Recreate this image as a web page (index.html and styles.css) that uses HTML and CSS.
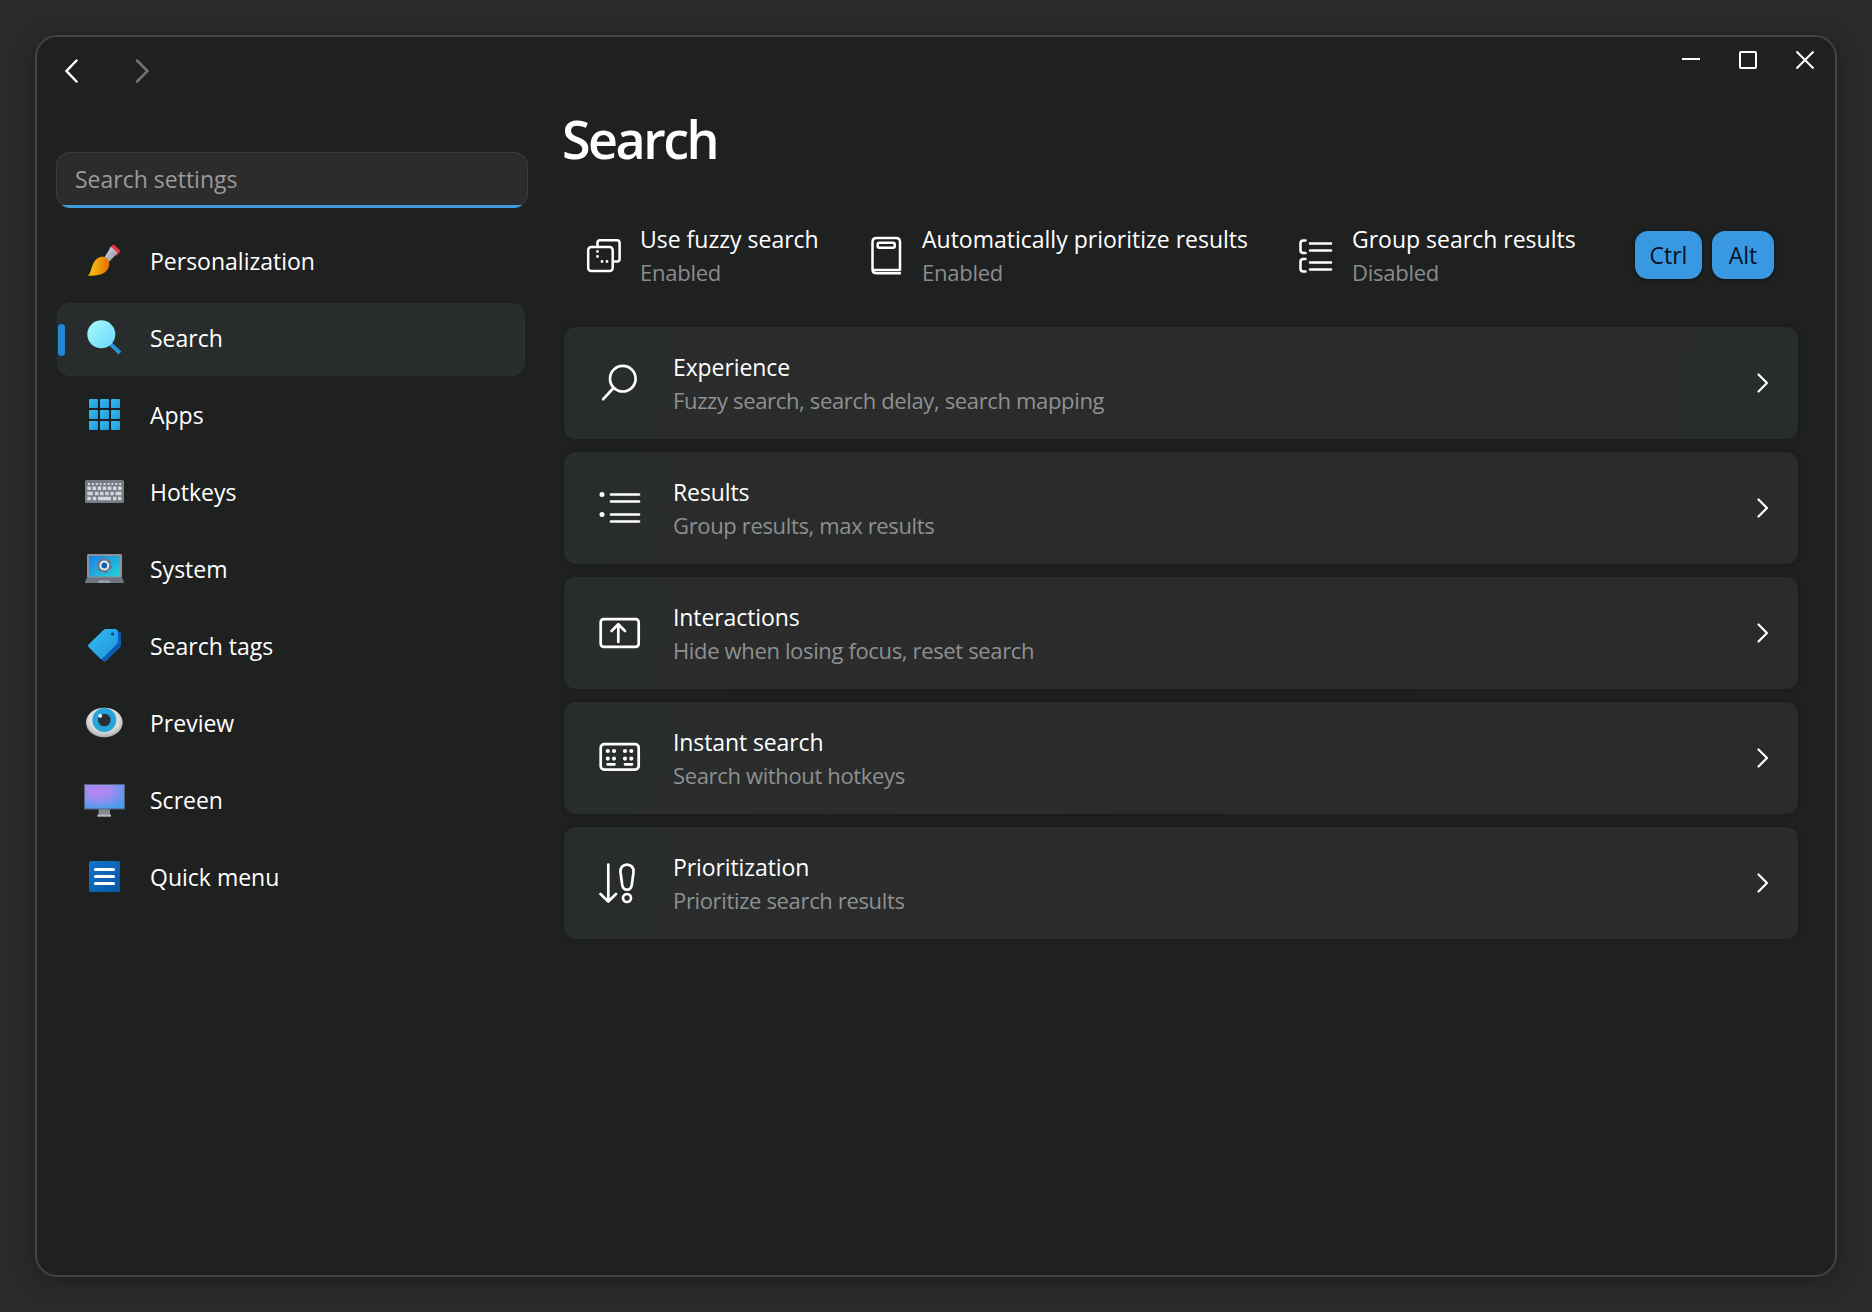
FILE: index.html
```html
<!DOCTYPE html>
<html lang="en">
<head>
<meta charset="utf-8">
<title>Search settings</title>
<link rel="stylesheet" href="styles.css">
</head>
<body>
<div class="window">
  <header class="titlebar">
    <nav class="history">
      <svg class="arrow" width="24" height="28" viewBox="0 0 24 28"><path d="M16.500 3.500 6.500 14l10 10.500"/></svg>
      <svg class="arrow arrow-off" width="24" height="28" viewBox="0 0 24 28"><path d="M7 3.500L17.500 14 7 24.500"/></svg>
    </nav>
    <div class="controls">
      <svg width="20" height="20" viewBox="0 0 20 20"><path d="M1 9h18"/></svg>
      <svg width="20" height="20" viewBox="0 0 20 20"><rect x="2" y="2" width="16" height="16" rx="1"/></svg>
      <svg width="20" height="20" viewBox="0 0 20 20"><path d="M1.500 1.500l17 17M18.500 1.500l-17 17"/></svg>
    </div>
  </header>
  <div class="body">
    <aside class="sidebar">
      <div class="search-box">Search settings</div>
      <ul class="menu">
        <li class="menu-item">
          <svg class="menu-icon" viewBox="0 0 44 44">
            <defs>
              <linearGradient id="brush" x1="0" y1=".5" x2="1" y2=".5"><stop offset="0" stop-color="#fcc60e"/><stop offset=".55" stop-color="#f09a08"/><stop offset="1" stop-color="#e56a08"/></linearGradient>
              <linearGradient id="ferrule" x1="0" y1="0" x2="1" y2="1"><stop offset="0" stop-color="#d5dae2"/><stop offset="1" stop-color="#8d939e"/></linearGradient>
            </defs>
            <path fill="#e8394a" d="M31.500 6.300l7 6.700-4 4.800-7.500-7z"/>
            <path fill="url(#ferrule)" d="M29 8.800l6.500 6.200-9 9.500-4.500-4.500z"/>
            <path fill="url(#brush)" d="M6 37.800c3-3 3.200-8 5.500-12.800 2.300-4.800 7-7.300 11.200-6 4.800 1.500 6 7.500 3 12.200-3.200 5-9.500 6.600-19.700 6.600z"/>
          </svg>
          <span>Personalization</span>
        </li>
        <li class="menu-item selected">
          <svg class="menu-icon" viewBox="0 0 44 44">
            <defs><linearGradient id="lens" x1="0" y1="0" x2="1" y2="1"><stop offset="0" stop-color="#a5fbfb"/><stop offset="1" stop-color="#6cd8fc"/></linearGradient></defs>
            <path stroke="#2793d6" stroke-width="4" d="M27.500 28l10.500 10"/>
            <circle cx="19.300" cy="19.300" r="14" fill="url(#lens)"/>
          </svg>
          <span>Search</span>
        </li>
        <li class="menu-item">
          <svg class="menu-icon" viewBox="0 0 44 44">
            <defs><linearGradient id="tile" x1="0" y1="0" x2="1" y2="1"><stop offset="0" stop-color="#3bb9ec"/><stop offset="1" stop-color="#1c9be0"/></linearGradient></defs>
            <g fill="url(#tile)">
              <rect x="7" y="7" width="9" height="9" rx="1"/><rect x="18" y="7" width="9" height="9" rx="1"/><rect x="29" y="7" width="9" height="9" rx="1"/>
              <rect x="7" y="18" width="9" height="9" rx="1"/><rect x="18" y="18" width="9" height="9" rx="1"/><rect x="29" y="18" width="9" height="9" rx="1"/>
              <rect x="7" y="29" width="9" height="9" rx="1"/><rect x="18" y="29" width="9" height="9" rx="1"/><rect x="29" y="29" width="9" height="9" rx="1"/>
            </g>
          </svg>
          <span>Apps</span>
        </li>
        <li class="menu-item">
          <svg class="menu-icon" viewBox="0 0 44 44">
            <rect x="3" y="11" width="39" height="23" rx="1.500" fill="#777b84"/>
            <g stroke="#d5d8df" fill="none">
              <path stroke-width="2" stroke-dasharray="2 1.900" d="M6 15h33.500"/>
              <path stroke-width="3.600" stroke-dasharray="3.600 1.530" d="M5.300 19.300H40"/>
              <path stroke-width="3.400" d="M5.300 24.500h5.500M13 24.500h3.500M18 24.500h3.500M23.200 24.500h3.500M28.300 24.500h3.500M33.500 24.500h6"/>
              <path stroke-width="3.400" d="M5.300 29.500h3.500M10.700 29.500h3.500M16 29.500h13M31 29.500h3.500M36 29.500h3.500"/>
            </g>
          </svg>
          <span>Hotkeys</span>
        </li>
        <li class="menu-item">
          <svg class="menu-icon" viewBox="0 0 44 44">
            <defs><linearGradient id="laptop" x1="0" y1="0" x2="1" y2="1"><stop offset="0" stop-color="#1b7fe6"/><stop offset="1" stop-color="#27d3d4"/></linearGradient></defs>
            <rect x="5" y="8" width="35" height="24" rx="1.500" fill="#8b919a"/>
            <rect x="7" y="10" width="31" height="20.500" fill="url(#laptop)"/>
            <circle cx="22.300" cy="19.500" r="6.400" fill="none" stroke="#727982" stroke-width="2.800" stroke-dasharray="3.400 3.300"/>
            <circle cx="22.300" cy="19.500" r="6.200" fill="#68707a"/>
            <circle cx="22.300" cy="19.500" r="4.900" fill="#e3edf5"/>
            <circle cx="22.300" cy="19.500" r="2.900" fill="#1560b0"/>
            <path fill="#6f757e" d="M5 31.500h35l2 4.200c0 .9-.5 1.300-1.300 1.300H4.300c-.8 0-1.300-.4-1.300-1.300z"/>
            <path fill="#9ba1aa" d="M15.500 36.800l2-2.500h9.500l2 2.500z"/>
          </svg>
          <span>System</span>
        </li>
        <li class="menu-item">
          <svg class="menu-icon" viewBox="0 0 44 44">
            <defs><linearGradient id="tag" x1="0" y1="0" x2="1" y2="1"><stop offset="0" stop-color="#37bdf0"/><stop offset="1" stop-color="#1b93dd"/></linearGradient></defs>
            <path fill="#0b5cb2" d="M24 8.500h12.500c1.700 0 2.500 1 2.500 2.500v10.500c0 1.500-.5 2.500-1.500 3.500L24 38c-1 1-2 1-3 0l-4-4z"/>
            <path fill="url(#tag)" d="M21.500 7c.8-.7 1.500-1 2.500-1h9c1.800 0 2.800 1 2.800 2.800V18c0 1.300-.3 2.300-1.300 3.300L20.500 35.500c-.8.800-1.700.8-2.500 0L6.800 24.300c-1-1-1-2 0-3z"/>
            <circle cx="30.700" cy="11" r="1.700" fill="#0b4f93"/>
          </svg>
          <span>Search tags</span>
        </li>
        <li class="menu-item">
          <svg class="menu-icon" viewBox="0 0 44 44">
            <defs>
              <radialGradient id="eye" cx=".5" cy=".4" r=".6"><stop offset="0" stop-color="#fff"/><stop offset=".7" stop-color="#d9dadb"/><stop offset="1" stop-color="#a9abad"/></radialGradient>
              <clipPath id="lid"><ellipse cx="22.300" cy="22.500" rx="18.300" ry="14.800"/></clipPath>
            </defs>
            <ellipse cx="22.300" cy="22.500" rx="18.300" ry="14.800" fill="url(#eye)"/>
            <circle cx="22.300" cy="20" r="12" fill="#25a5dc" clip-path="url(#lid)"/>
            <circle cx="22.300" cy="20" r="6.300" fill="#2a3036"/>
            <circle cx="18.200" cy="15.800" r="1.900" fill="#fff"/>
          </svg>
          <span>Preview</span>
        </li>
        <li class="menu-item">
          <svg class="menu-icon" viewBox="0 0 44 44">
            <defs><radialGradient id="monitor" cx=".35" cy=".25" r=".85"><stop offset="0" stop-color="#b884f0"/><stop offset=".4" stop-color="#9f8cf0"/><stop offset="1" stop-color="#3f9fec"/></radialGradient></defs>
            <rect x="16.500" y="32" width="11.500" height="6" fill="#86898d"/>
            <rect x="15.500" y="37.500" width="13.500" height="2.200" fill="#b6b9bc"/>
            <rect x="2" y="7" width="41" height="25.500" fill="#59617e"/>
            <rect x="3" y="8" width="39" height="23.500" fill="url(#monitor)"/>
          </svg>
          <span>Screen</span>
        </li>
        <li class="menu-item">
          <svg class="menu-icon" viewBox="0 0 44 44">
            <defs><linearGradient id="list" x1="0" y1="0" x2="1" y2="1"><stop offset="0" stop-color="#0f75cb"/><stop offset="1" stop-color="#0856a4"/></linearGradient></defs>
            <rect x="7" y="7" width="31" height="31" rx="1.500" fill="url(#list)"/>
            <path stroke="#fff" stroke-width="3.200" stroke-linecap="round" d="M13.500 15.500h18M13.500 22.500h18M13.500 29.500h18"/>
          </svg>
          <span>Quick menu</span>
        </li>
      </ul>
    </aside>
    <main class="main">
      <h1 class="title">Search</h1>
      <section class="status">
        <div class="stat stat-fuzzy">
          <svg class="stat-icon" viewBox="0 0 40 40"><rect x="4.200" y="11" width="24.500" height="24" rx="3"/><path d="M13.500 10V6.700c0-1.600 1-2.500 2.500-2.500h17c1.600 0 2.600 1 2.600 2.600V23c0 1.600-1 2.500-2.500 2.500H30"/><path class="dots" d="M13.500 15.500v0M13.500 20.500v0M18 25.500v0M23 25.500v0"/></svg>
          <div><div class="stat-name">Use fuzzy search</div><div class="stat-value">Enabled</div></div>
        </div>
        <div class="stat stat-auto">
          <svg class="stat-icon" viewBox="0 0 40 40"><path d="M34 37.200H10.500c-2.500 0-4-1.500-4-4V6c0-2.500 1.500-4 4-4H30c2.500 0 4 1.500 4 4v28H9.500c-1.500 0-2.500-.4-3-1"/><rect x="11.700" y="6.800" width="17" height="5" rx="1.500"/></svg>
          <div><div class="stat-name">Automatically prioritize results</div><div class="stat-value">Enabled</div></div>
        </div>
        <div class="stat stat-group">
          <svg class="stat-icon" viewBox="0 0 40 40"><path d="M9.500 4.500H7.300c-1.800 0-2.800 1-2.800 2.800v7c0 1.800 1 2.700 2.800 2.700h2.200M9.500 23H7.300c-1.800 0-2.800 1-2.800 2.800v7c0 1.800 1 2.700 2.800 2.700h2.200M14 7.500h21M14 14.500h21M14 26.500h21M14 33.500h21"/></svg>
          <div><div class="stat-name">Group search results</div><div class="stat-value">Disabled</div></div>
        </div>
        <div class="keys"><kbd>Ctrl</kbd><kbd>Alt</kbd></div>
      </section>
      <section class="cards">
        <a class="card">
          <svg class="card-icon" viewBox="0 0 44 44"><circle cx="24.800" cy="17.700" r="12.800"/><path d="M15.500 27L5.200 38.200"/></svg>
          <div class="card-text"><div class="card-title">Experience</div><div class="card-desc">Fuzzy search, search delay, search mapping</div></div>
          <svg class="chevron" viewBox="0 0 16 24"><path d="M3.500 3.500L12 12l-8.500 8.500"/></svg>
        </a>
        <a class="card">
          <svg class="card-icon" viewBox="0 0 44 44"><path d="M13 8.500h28M13 15.500h28M13 28.500h28M13 35.500h28"/><path class="dots-lg" d="M4 8.500v0M4 28.500v0"/></svg>
          <div class="card-text"><div class="card-title">Results</div><div class="card-desc">Group results, max results</div></div>
          <svg class="chevron" viewBox="0 0 16 24"><path d="M3.500 3.500L12 12l-8.500 8.500"/></svg>
        </a>
        <a class="card">
          <svg class="card-icon" viewBox="0 0 44 44"><rect x="2.700" y="8.200" width="38" height="27.600" rx="3"/><path d="M20.300 31V13.500M13.500 20l6.800-6.700L27 20"/></svg>
          <div class="card-text"><div class="card-title">Interactions</div><div class="card-desc">Hide when losing focus, reset search</div></div>
          <svg class="chevron" viewBox="0 0 16 24"><path d="M3.500 3.500L12 12l-8.500 8.500"/></svg>
        </a>
        <a class="card">
          <svg class="card-icon" viewBox="0 0 44 44"><rect x="2.700" y="8.200" width="38" height="25.400" rx="3.500"/><path d="M9.500 28.300h7M27 28.300h7"/><path class="dots-md" d="M9.800 15v0M16 15v0M27 15v0M33.300 15v0M9.800 22.600v0M16 22.600v0M27 22.600v0M33.300 22.600v0"/></svg>
          <div class="card-text"><div class="card-title">Instant search</div><div class="card-desc">Search without hotkeys</div></div>
          <svg class="chevron" viewBox="0 0 16 24"><path d="M3.500 3.500L12 12l-8.500 8.500"/></svg>
        </a>
        <a class="card">
          <svg class="card-icon" viewBox="0 0 44 44"><path d="M10.300 3.500v36.500M2.500 33l7.800 7.500L18 33"/><path d="M29 3.700c-4.300 0-7 3-6.500 7.500l1.700 12.500c.5 3 2.200 5 4.800 5s4.300-2 4.800-5l1.700-12.500c.5-4.500-2.200-7.500-6.500-7.500z"/><circle cx="29" cy="37" r="4"/></svg>
          <div class="card-text"><div class="card-title">Prioritization</div><div class="card-desc">Prioritize search results</div></div>
          <svg class="chevron" viewBox="0 0 16 24"><path d="M3.500 3.500L12 12l-8.500 8.500"/></svg>
        </a>
      </section>
    </main>
  </div>
</div>
</body>
</html>
```
FILE: styles.css
```css
* { box-sizing: border-box; }

body {
  margin: 0;
  padding: 35px;
  height: 1312px;
  overflow: hidden;
  background: #2a2a2a;
  color: #fff;
  font: 23px/34px "Open Sans", "Noto Sans", sans-serif;
  letter-spacing: 0;
  white-space: nowrap;
}

svg { display: block; flex: none; fill: none; }

.window {
  width: 1802px;
  height: 1242px;
  border: 2px solid #424443;
  border-radius: 22px;
  background: radial-gradient(ellipse 800px 520px at 1010px 560px, #1f1f20 0%, #1f2021 60%, #1f2120 100%);
  box-shadow: 0 4px 22px rgba(0, 0, 0, 0.3);
}

.titlebar {
  display: flex;
  justify-content: space-between;
  align-items: flex-start;
  height: 70px;
  padding: 13px 20px 0 23px;
}

.history { display: flex; gap: 46px; padding-top: 7px; }
.arrow { stroke: #fff; stroke-width: 2.5; stroke-linecap: round; }
.arrow-off { stroke: #737473; }

.controls { display: flex; gap: 37px; stroke: #fff; stroke-width: 2; }

.body { display: flex; gap: 36px; padding: 0 37px 0 19px; }

.sidebar { width: 472px; padding-top: 45px; }

.search-box {
  position: relative;
  overflow: hidden;
  height: 56px;
  padding: 9px 18px;
  border: 1px solid #3a3b3b;
  border-bottom: 0;
  border-radius: 14px;
  background: #2c2c2c;
  color: #9a9a9a;
}

.search-box::after {
  content: "";
  position: absolute;
  left: 0;
  right: 0;
  bottom: 0;
  height: 3px;
  background: #429ade;
}

.menu {
  display: flex;
  flex-direction: column;
  gap: 4px;
  list-style: none;
  margin: 18px 3px 0 1px;
  padding: 0;
}

.menu-item {
  position: relative;
  display: flex;
  gap: 24px;
  height: 73px;
  padding: 11px 0 0 24px;
  border: 1px solid transparent;
  border-radius: 13px;
  line-height: 46px;
}

.menu-item.selected { background: #292c2c; border-color: #2f3131; }

.menu-item.selected::before {
  content: "";
  position: absolute;
  left: 0;
  top: 20px;
  width: 7px;
  height: 32px;
  border-radius: 3.5px;
  background: #1f86d8;
}

.menu-icon { width: 44px; height: 44px; }

.main { flex: 1; }

.title {
  margin: -1px 0 0 -2px;
  font-size: 52px;
  line-height: 66px;
  font-weight: 600;
  letter-spacing: -2.5px;
}

.status { display: flex; height: 84px; margin-top: 41px; padding-left: 20px; }

.stat { display: flex; gap: 16px; }
.stat-fuzzy { width: 282px; }
.stat-auto { width: 430px; }
.stat-group { width: 339px; }
.stat-icon { width: 40px; height: 40px; margin-top: 23px; stroke: #fff; stroke-width: 2.5; stroke-linecap: round; stroke-linejoin: round; }
.stat-name { margin-top: 9px; }
.stat-value { font-size: 22px; line-height: 33px; letter-spacing: -0.25px; color: #8c8c8c; }
.dots { stroke-width: 2.8; }
.dots-md { stroke-width: 4.2; }
.dots-lg { stroke-width: 5; }

.keys { display: flex; gap: 10px; padding-top: 18px; align-items: flex-start; }
.keys kbd {
  height: 48px;
  min-width: 62px;
  padding: 7px 14.5px 0;
  border-radius: 13px;
  background: #3898e2;
  box-shadow: 0 1px 4px rgba(0, 0, 0, 0.5);
  color: #06131f;
  font: inherit;
  text-align: center;
}

.cards { display: flex; flex-direction: column; gap: 13px; margin-top: 30px; }

.card {
  display: flex;
  align-items: center;
  height: 112px;
  padding: 0 27px 0 34px;
  border-radius: 12px;
  background: linear-gradient(100deg, #292c2d, #2b2b2b 45%);
  box-shadow: 0 0 5px rgba(0, 0, 0, 0.25);
}

.card:first-child { background: linear-gradient(100deg, #292c2d, #2b2b2b 45%, #2b2b2b 82%, #292c2d 92%); }

.card-icon { width: 44px; height: 44px; stroke: #fff; stroke-width: 2.7; stroke-linecap: round; stroke-linejoin: round; }
.card-text { flex: 1; padding-left: 31px; }
.card-title { letter-spacing: -0.1px; }
.card-desc { font-size: 22px; line-height: 33px; letter-spacing: -0.35px; color: #8f9090; }
.chevron { width: 16px; height: 24px; margin-top: -1px; stroke: #fff; stroke-width: 2.2; stroke-linecap: round; stroke-linejoin: round; }
```
